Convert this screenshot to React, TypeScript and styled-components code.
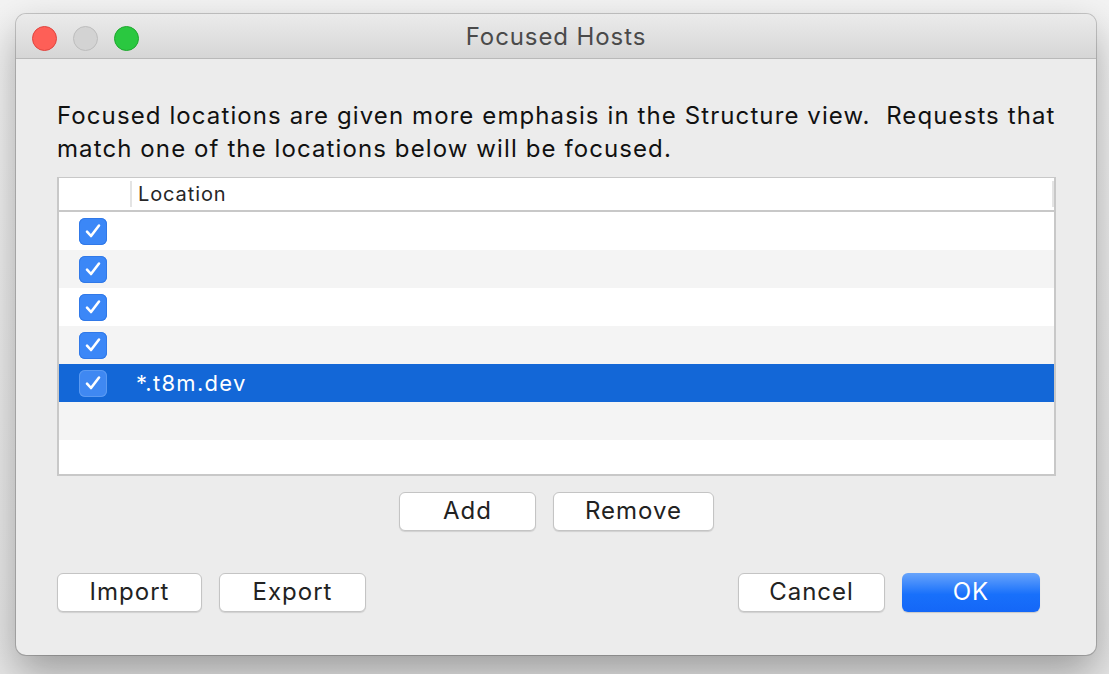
import React from "react";
import styled, { createGlobalStyle } from "styled-components";

const GlobalStyle = createGlobalStyle`
  html, body {
    margin: 0;
    padding: 0;
    background: #efefef;
  }
  body {
    font-family: Inter, "Noto Sans", "Liberation Sans", sans-serif;
  }
`;

const Desktop = styled.div`
  width: 1109px;
  height: 674px;
  box-sizing: border-box;
  padding: 14px 13px 0 16px;
  background: linear-gradient(#f3f3f3, #e6e6e6);
  overflow: hidden;
`;

const Window = styled.div`
  width: 1080px;
  height: 641px;
  border-radius: 10px;
  background: #ececec;
  box-shadow: 0 0 0 1px rgba(0, 0, 0, 0.18), 0 18px 40px rgba(0, 0, 0, 0.32);
  display: flex;
  flex-direction: column;
  overflow: hidden;
`;

const TitleBar = styled.div`
  height: 44px;
  flex: none;
  display: flex;
  align-items: center;
  justify-content: center;
  position: relative;
  background: linear-gradient(#ebebeb, #d6d6d6);
  border-bottom: 1px solid #b9b9b9;
`;

const Lights = styled.div`
  position: absolute;
  left: 16px;
  top: 12px;
  display: flex;
  gap: 16px;
`;

const Light = styled.span<{ $fill: string; $edge: string }>`
  width: 23px;
  height: 23px;
  border-radius: 50%;
  background: ${(p) => p.$fill};
  border: 1px solid ${(p) => p.$edge};
`;

const Title = styled.div`
  font-size: 24px;
  letter-spacing: 0.9px;
  color: #4a4a4a;
`;

const Content = styled.div`
  padding: 40px 40px 0 41px;
  display: flex;
  flex-direction: column;
`;

const Description = styled.p`
  margin: 0;
  font-size: 24px;
  line-height: 33px;
  color: #111;
  letter-spacing: 1.1px;
  white-space: nowrap;
`;

const Table = styled.div`
  margin-top: 12px;
  height: 299px;
  box-sizing: border-box;
  border: 2px solid #c8c8c8;
  border-top-width: 1px;
  background: #fff;
  display: flex;
  flex-direction: column;
  overflow: hidden;
`;

const Header = styled.div`
  height: 32px;
  flex: none;
  display: flex;
  align-items: center;
  border-bottom: 2px solid #c8c8c8;
  background: #fff;
`;

const HeaderCell = styled.div<{ $width?: number }>`
  height: 26px;
  display: flex;
  align-items: center;
  box-sizing: border-box;
  ${(p) => (p.$width ? `width: ${p.$width}px;` : "flex: 1;")}
  padding-left: 6px;
  font-size: 20px;
  letter-spacing: 0.9px;
  color: #262626;
  border-left: 2px solid #e4e4e4;
  &:first-child {
    border-left: none;
  }
  &:last-child {
    border-right: 2px solid #e4e4e4;
  }
`;

const Row = styled.div<{ $alt: boolean; $selected?: boolean }>`
  height: 38px;
  flex: none;
  display: flex;
  align-items: center;
  background: ${(p) => (p.$selected ? "#1367d7" : p.$alt ? "#f4f4f4" : "#fff")};
  color: ${(p) => (p.$selected ? "#fff" : "#222")};
`;

const CheckCell = styled.div`
  width: 71px;
  flex: none;
  display: flex;
  padding-left: 20px;
  box-sizing: border-box;
`;

const Check = styled.span<{ $selected?: boolean }>`
  width: 28px;
  height: 27px;
  border-radius: 6px;
  background: ${(p) => (p.$selected ? "#3f88f2" : "#3b87f7")};
  display: flex;
  align-items: center;
  justify-content: center;
  box-shadow: ${(p) => (p.$selected ? "0 0 0 1px #5b9af2 inset" : "0 0 0 1px #3179e8 inset")};
`;

const LocationText = styled.div`
  padding-left: 6px;
  font-size: 22px;
  letter-spacing: 1.3px;
`;

const ButtonRow = styled.div<{ $spread?: boolean }>`
  display: flex;
  align-items: center;
  justify-content: ${(p) => (p.$spread ? "space-between" : "center")};
  margin-top: ${(p) => (p.$spread ? "42px" : "16px")};
  padding-right: ${(p) => (p.$spread ? "16px" : "0")};
`;

const Group = styled.div`
  display: flex;
  gap: 17px;
`;

const Button = styled.button<{ $width: number; $primary?: boolean }>`
  width: ${(p) => p.$width}px;
  height: 39px;
  box-sizing: border-box;
  border-radius: 6px;
  font-family: inherit;
  font-size: 24px;
  letter-spacing: 1px;
  padding: 0 0 2px;
  cursor: default;
  ${(p) =>
    p.$primary
      ? `
    color: #fff;
    border: none;
    background: linear-gradient(#68a4fb, #1870fb 55%, #1467f7);
    box-shadow: 0 1px 1px rgba(0,0,0,0.15);
  `
      : `
    color: #222;
    background: #fff;
    border: 1px solid #c4c4c4;
    box-shadow: 0 1px 1px rgba(0,0,0,0.12);
  `}
`;

const CheckMark = () => (
  <svg width="18" height="16" viewBox="0 0 18 16">
    <path
      d="M3 8.6 L7 13 L15 2.5"
      fill="none"
      stroke="#fff"
      strokeWidth="2.6"
      strokeLinecap="round"
      strokeLinejoin="round"
    />
  </svg>
);

const rows = [
  { checked: true, text: "" },
  { checked: true, text: "" },
  { checked: true, text: "" },
  { checked: true, text: "" },
  { checked: true, text: "*.t8m.dev", selected: true },
  { checked: false, text: "" },
  { checked: false, text: "" },
];

export default function App() {
  return (
    <>
      <GlobalStyle />
      <Desktop>
        <Window>
          <TitleBar>
            <Lights>
              <Light $fill="#fe5f57" $edge="#e0443e" />
              <Light $fill="#d3d3d3" $edge="#bdbdbd" />
              <Light $fill="#2ac840" $edge="#1ea82e" />
            </Lights>
            <Title>Focused Hosts</Title>
          </TitleBar>
          <Content>
            <Description>
              Focused locations are given more emphasis in the Structure view.&nbsp; Requests that
              <br />
              match one of the locations below will be focused.
            </Description>
            <Table>
              <Header>
                <HeaderCell $width={71} />
                <HeaderCell>Location</HeaderCell>
              </Header>
              {rows.map((r, i) => (
                <Row key={i} $alt={i % 2 === 1} $selected={r.selected}>
                  <CheckCell>
                    {r.checked && (
                      <Check $selected={r.selected}>
                        <CheckMark />
                      </Check>
                    )}
                  </CheckCell>
                  <LocationText>{r.text}</LocationText>
                </Row>
              ))}
            </Table>
            <ButtonRow>
              <Group>
                <Button $width={137}>Add</Button>
                <Button $width={161}>Remove</Button>
              </Group>
            </ButtonRow>
            <ButtonRow $spread>
              <Group>
                <Button $width={145}>Import</Button>
                <Button $width={147}>Export</Button>
              </Group>
              <Group>
                <Button $width={147}>Cancel</Button>
                <Button $width={138} $primary>
                  OK
                </Button>
              </Group>
            </ButtonRow>
          </Content>
        </Window>
      </Desktop>
    </>
  );
}
